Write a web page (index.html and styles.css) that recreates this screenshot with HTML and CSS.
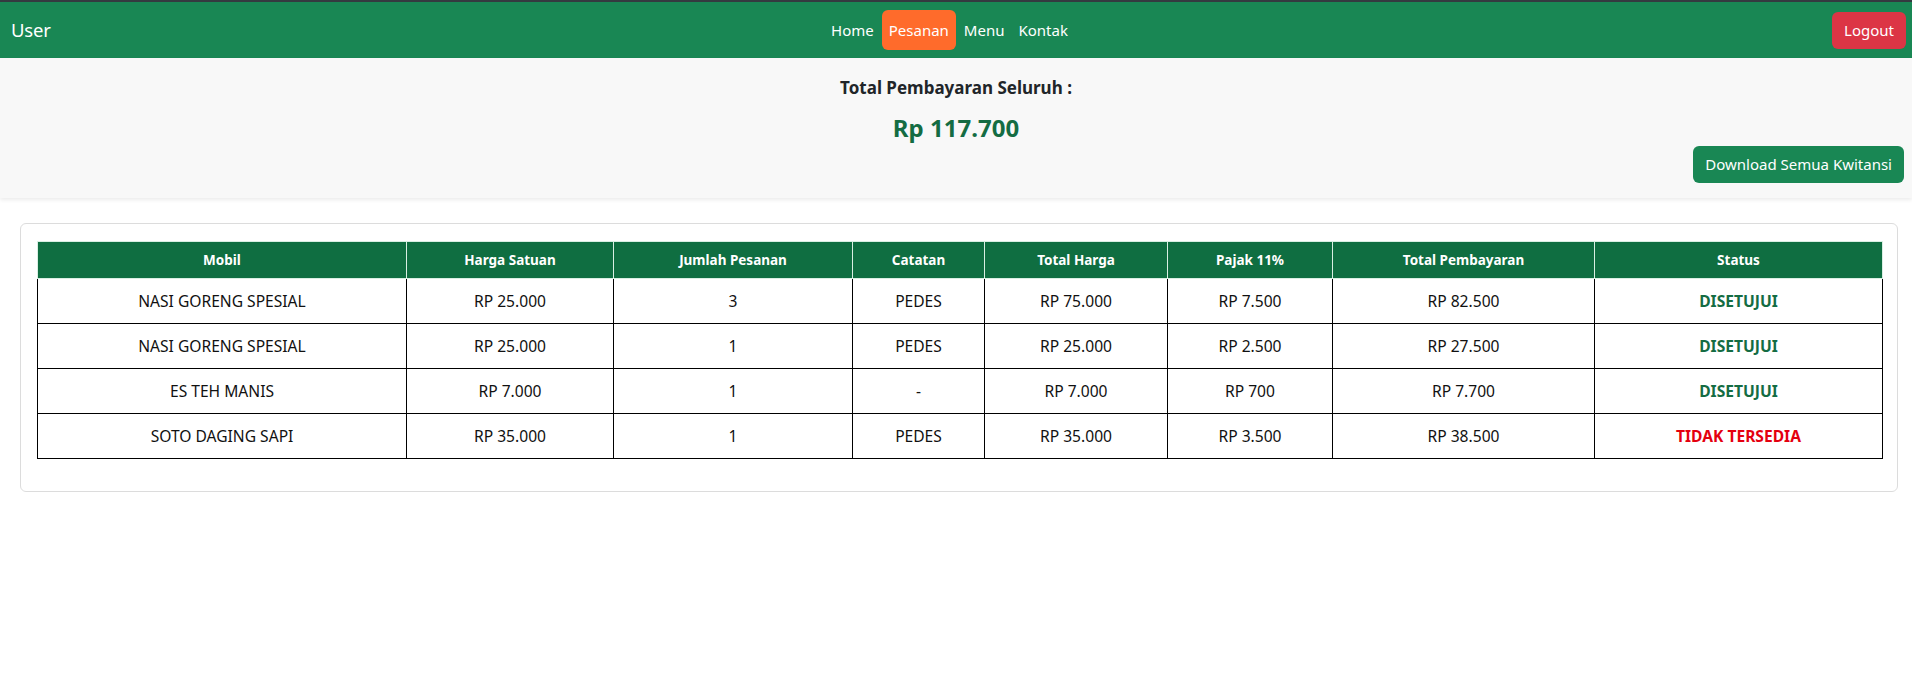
FILE: index.html
```html
<!DOCTYPE html>
<html lang="id">
<head>
<meta charset="utf-8">
<title>Pesanan</title>
<link rel="stylesheet" href="styles.css">
</head>
<body>
<nav class="navbar">
  <a class="brand" href="#">User</a>
  <ul class="nav-links">
    <li><a href="#">Home</a></li>
    <li><a href="#" class="active">Pesanan</a></li>
    <li><a href="#">Menu</a></li>
    <li><a href="#">Kontak</a></li>
  </ul>
  <div class="nav-right"><a href="#" class="btn-logout">Logout</a></div>
</nav>

<section class="summary">
  <h3 class="summary-title">Total Pembayaran Seluruh :</h3>
  <p class="summary-amount">Rp 117.700</p>
  <div class="summary-actions"><a href="#" class="btn-download">Download Semua Kwitansi</a></div>
</section>

<main class="card">
  <table class="orders">
    <thead>
      <tr>
        <th>Mobil</th>
        <th>Harga Satuan</th>
        <th>Jumlah Pesanan</th>
        <th>Catatan</th>
        <th>Total Harga</th>
        <th>Pajak 11%</th>
        <th>Total Pembayaran</th>
        <th>Status</th>
      </tr>
    </thead>
    <tbody>
      <tr>
        <td>NASI GORENG SPESIAL</td><td>RP 25.000</td><td>3</td><td>PEDES</td><td>RP 75.000</td><td>RP 7.500</td><td>RP 82.500</td><td class="status ok">DISETUJUI</td>
      </tr>
      <tr>
        <td>NASI GORENG SPESIAL</td><td>RP 25.000</td><td>1</td><td>PEDES</td><td>RP 25.000</td><td>RP 2.500</td><td>RP 27.500</td><td class="status ok">DISETUJUI</td>
      </tr>
      <tr>
        <td>ES TEH MANIS</td><td>RP 7.000</td><td>1</td><td>-</td><td>RP 7.000</td><td>RP 700</td><td>RP 7.700</td><td class="status ok">DISETUJUI</td>
      </tr>
      <tr>
        <td>SOTO DAGING SAPI</td><td>RP 35.000</td><td>1</td><td>PEDES</td><td>RP 35.000</td><td>RP 3.500</td><td>RP 38.500</td><td class="status no">TIDAK TERSEDIA</td>
      </tr>
    </tbody>
  </table>
</main>
</body>
</html>
```
FILE: styles.css
```css
* { box-sizing: border-box; }
html, body { margin: 0; padding: 0; }
body {
  font-family: "Noto Sans", "Open Sans", "Liberation Sans", sans-serif;
  color: #212529;
  background: #fff;
  font-size: 16px;
  line-height: 1.5;
}
a { text-decoration: none; }

.navbar {
  display: grid;
  grid-template-columns: 1fr auto 1fr;
  align-items: center;
  height: 58px;
  background: #198754;
  border-top: 2px solid #343a40;
  padding: 0 6px 0 11px;
}
.brand {
  color: #fff;
  font-size: 18.5px;
  letter-spacing: -0.2px;
}
.nav-links {
  list-style: none;
  margin: 0 0 0 -18px;
  padding: 0;
  display: flex;
}
.nav-links a {
  display: block;
  color: #fff;
  font-size: 15px;
  padding: 8px 7px;
  border-radius: 6px;
  line-height: 24px;
}
.nav-links a.active {
  background: #ff6b2b;
  margin: 0 1px;
}
.nav-right { display: flex; justify-content: flex-end; }
.btn-logout {
  background: #dc3545;
  color: #fff;
  font-size: 15px;
  padding: 6px 12px;
  border-radius: 6px;
  line-height: 25px;
}

.summary {
  background: #f8f8f8;
  padding: 16px 8px 15px;
  box-shadow: 0 2px 4px rgba(0,0,0,0.08);
  text-align: center;
}
.summary-title {
  margin: 0;
  font-size: 17px;
  font-weight: 700;
  line-height: 27px;
  color: #212529;
}
.summary-amount {
  margin: 9px 0 0;
  font-size: 24px;
  font-weight: 700;
  line-height: 36px;
  color: #146c43;
}
.summary-actions {
  display: flex;
  justify-content: flex-end;
}
.btn-download {
  display: block;
  background: #198754;
  color: #fff;
  font-size: 15px;
  line-height: 25px;
  padding: 6px 12px;
  border-radius: 6px;
}

.card {
  display: block;
  margin: 25px 14px 0 20px;
  border: 1px solid #dcdcdc;
  border-radius: 6px;
  padding: 17px 16px 16px;
}
.orders {
  width: 100%;
  border-collapse: collapse;
  margin-bottom: 16px;
  table-layout: fixed;
}
.orders th {
  background: #0f6e41;
  color: #fff;
  font-size: 13.5px;
  font-weight: 700;
  padding: 8px;
  line-height: 20px;
  border: 1px solid #d9efe3;
  text-align: center;
}
.orders td {
  border: 1px solid #000;
  text-align: center;
  font-size: 15.6px;
  padding: 10px 8px;
  line-height: 24px;
  color: #111;
}
.orders th:nth-child(1) { width: 369px; }
.orders th:nth-child(2) { width: 207px; }
.orders th:nth-child(3) { width: 239px; }
.orders th:nth-child(4) { width: 132px; }
.orders th:nth-child(5) { width: 183px; }
.orders th:nth-child(6) { width: 165px; }
.orders th:nth-child(7) { width: 262px; }
.orders th:nth-child(8) { width: 288px; }
.orders td.status { font-weight: 700; }
.orders td.ok { color: #146c43; }
.orders td.no { color: #e4000f; }
```
